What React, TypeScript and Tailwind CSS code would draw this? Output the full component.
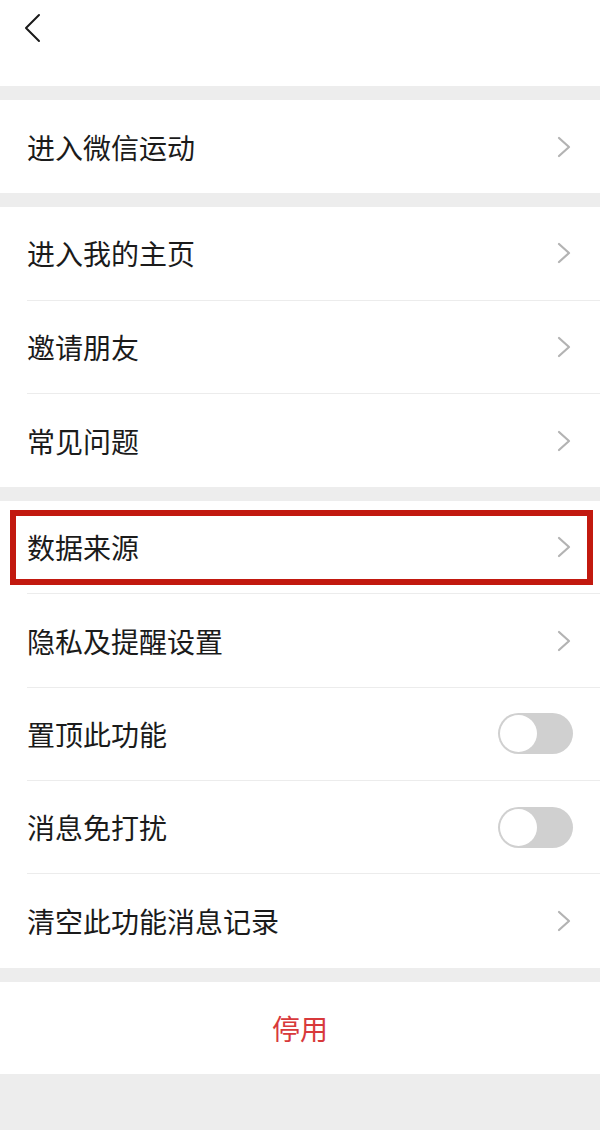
import React from "react";

const font = { fontFamily: '"Noto Sans CJK SC", "Noto Sans", sans-serif' };

function Chevron() {
  return (
    <svg width="14" height="22" viewBox="0 0 14 22" fill="none" stroke="#b3b3b3" strokeWidth="2.2" strokeLinecap="round" strokeLinejoin="round">
      <path d="M2 2l10 9-10 9" />
    </svg>
  );
}

function Toggle() {
  return (
    <div className="relative h-[41px] w-[75px] rounded-full bg-[#d0d0d0]">
      <div className="absolute left-[2px] top-[2px] h-[37px] w-[37px] rounded-full bg-white" />
    </div>
  );
}

type RowProps = {
  label: string;
  kind?: "chevron" | "toggle";
  divider?: boolean;
  highlight?: boolean;
};

function Row({ label, kind = "chevron", divider = true, highlight = false }: RowProps) {
  return (
    <div className="relative bg-white pl-[27px]">
      <div
        className={`flex h-[93.3px] items-center justify-between pr-[27px] ${
          divider ? "border-b border-[#ececec]" : ""
        }`}
      >
        <span className="text-[28px] leading-none text-[#1b1b1b]">{label}</span>
        {kind === "chevron" ? (
          <span className="mr-[2px] flex items-center">
            <Chevron />
          </span>
        ) : (
          <Toggle />
        )}
      </div>
      {highlight && (
        <div className="pointer-events-none absolute bottom-[9px] left-[10px] right-[7px] top-[9px] border-[6px] border-[#c2190f]" />
      )}
    </div>
  );
}

function Band() {
  return <div className="h-[14px] bg-[#ededed]" />;
}

export default function App() {
  return (
    <div className="min-h-[1130px] w-[600px] bg-[#ededed]" style={font}>
      <header className="flex h-[86px] items-start bg-white pl-[22px] pt-[12px]">
        <svg width="22" height="32" viewBox="0 0 22 32" fill="none" stroke="#1a1a1a" strokeWidth="2" strokeLinecap="round" strokeLinejoin="round">
          <path d="M17 3L4 16l13 13" />
        </svg>
      </header>
      <Band />
      <Row label="进入微信运动" divider={false} />
      <Band />
      <Row label="进入我的主页" />
      <Row label="邀请朋友" />
      <Row label="常见问题" divider={false} />
      <Band />
      <Row label="数据来源" highlight />
      <Row label="隐私及提醒设置" />
      <Row label="置顶此功能" kind="toggle" />
      <Row label="消息免打扰" kind="toggle" />
      <Row label="清空此功能消息记录" divider={false} />
      <Band />
      <button
        type="button"
        className="flex h-[92px] w-full items-center justify-center bg-white text-[28px] text-[#d8393b]"
      >
        停用
      </button>
    </div>
  );
}
